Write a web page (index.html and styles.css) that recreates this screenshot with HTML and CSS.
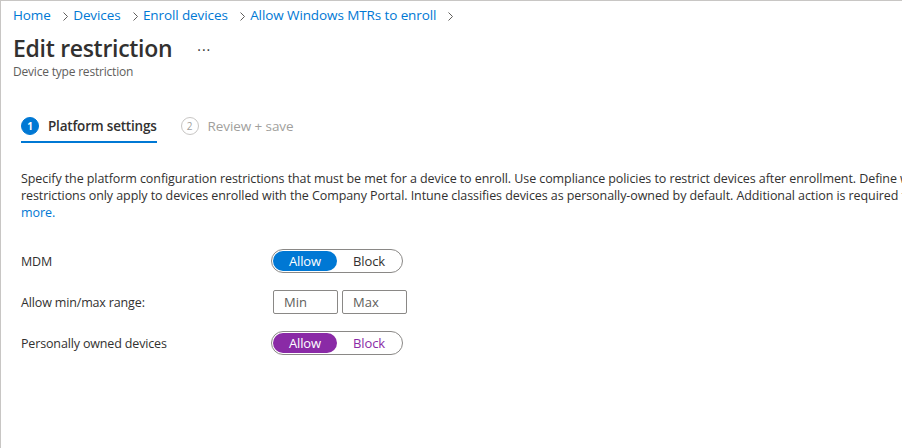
FILE: index.html
```html
<!DOCTYPE html>
<html lang="en">
<head>
  <meta charset="UTF-8">
  <title>Edit restriction</title>
  <meta name="viewport" content="width=device-width, initial-scale=1.0">
  <link rel="stylesheet" href="styles.css">
</head>
<body>
  <div class="blade">
    <!-- Хлебные крошки -->
    <nav class="crumbs">
      <a href="#">Home</a><svg class="sep" width="5" height="9" viewBox="0 0 5 9"><path d="M0.5 0.5 L4.5 4.5 L0.5 8.5" fill="none" stroke="#605e5c" stroke-width="1"/></svg>
      <a href="#">Devices</a><svg class="sep" width="5" height="9" viewBox="0 0 5 9"><path d="M0.5 0.5 L4.5 4.5 L0.5 8.5" fill="none" stroke="#605e5c" stroke-width="1"/></svg>
      <a href="#">Enroll devices</a><svg class="sep" width="5" height="9" viewBox="0 0 5 9"><path d="M0.5 0.5 L4.5 4.5 L0.5 8.5" fill="none" stroke="#605e5c" stroke-width="1"/></svg>
      <a href="#">Allow Windows MTRs to enroll</a><svg class="sep" width="5" height="9" viewBox="0 0 5 9"><path d="M0.5 0.5 L4.5 4.5 L0.5 8.5" fill="none" stroke="#605e5c" stroke-width="1"/></svg>
    </nav>

    <header class="blade-head">
      <div class="title-row">
        <h1>Edit restriction</h1>
        <span class="more-dots">&middot;&middot;&middot;</span>
      </div>
      <div class="subtitle">Device type restriction</div>
    </header>

    <!-- Шаги мастера -->
    <div class="steps">
      <div class="step active">
        <span class="step-num">1</span>
        <span class="step-label">Platform settings</span>
      </div>
      <div class="step">
        <span class="step-num">2</span>
        <span class="step-label">Review + save</span>
      </div>
    </div>

    <p class="intro">
      Specify the platform configuration restrictions that must be met for a device to enroll. Use compliance policies to restrict devices after enrollment. Define which platforms, versions, and management types can enroll. These<br>
      restrictions only apply to devices enrolled with the Company Portal. Intune classifies devices as personally-owned by default. Additional action is required to classify devices as corporate-owned. Learn<br>
      <a href="#">more.</a>
    </p>

    <div class="settings">
      <div class="row">
        <span class="row-label">MDM</span>
        <div class="toggle">
          <span class="opt on">Allow</span>
          <span class="opt">Block</span>
        </div>
      </div>
      <div class="row">
        <span class="row-label">Allow min/max range:</span>
        <div class="range">
          <input type="text" placeholder="Min">
          <input type="text" placeholder="Max">
        </div>
      </div>
      <div class="row">
        <span class="row-label">Personally owned devices</span>
        <div class="toggle changed">
          <span class="opt on">Allow</span>
          <span class="opt">Block</span>
        </div>
      </div>
    </div>
  </div>
</body>
</html>
```

FILE: styles.css
```css
html, body {
  margin: 0;
  padding: 0;
  height: 100%;
  overflow: hidden;
}
body {
  background: #fff;
  font-family: "Open Sans", "Noto Sans", sans-serif;
  color: #323130;
}
.blade {
  height: 100vh;
  box-sizing: border-box;
  border-top: 1px solid #c8c6c4;
  border-left: 1px solid #c8c6c4;
  overflow: hidden;
}
/* Крошки */
.crumbs {
  padding: 4px 0 0 12px;
  height: 20px;
  font-size: 13.5px;
  letter-spacing: -0.1px;
  line-height: 20px;
  white-space: nowrap;
}
.crumbs a {
  color: #0078d4;
  text-decoration: none;
}
.crumbs .sep {
  margin: 0 2px 0 12px;
  vertical-align: -0.5px;
}
/* Заголовок */
.blade-head {
  padding: 7px 0 0 12px;
}
.title-row {
  display: flex;
  align-items: center;
  height: 32px;
}
.title-row h1 {
  margin: 0;
  font-size: 23px;
  letter-spacing: -0.3px;
  font-weight: 600;
  line-height: 32px;
}
.more-dots {
  margin-left: 25px;
  font-size: 14px;
  color: #323130;
  letter-spacing: 1px;
  padding-top: 2px;
}
.subtitle {
  font-size: 12px;
  letter-spacing: -0.2px;
  line-height: 16px;
  color: #605e5c;
}
/* Шаги */
.steps {
  display: flex;
  gap: 24px;
  padding: 33px 0 0 20px;
}
.step {
  display: flex;
  align-items: center;
  gap: 9px;
  height: 30px;
  font-size: 13.5px;
  letter-spacing: -0.1px;
  color: #a19f9d;
  box-sizing: border-box;
  border-bottom: 2px solid transparent;
  padding-bottom: 2px;
}
.step.active {
  color: #323130;
  font-weight: 600;
  letter-spacing: -0.2px;
  border-bottom-color: #0078d4;
}
.step-num {
  width: 16px;
  height: 16px;
  border-radius: 50%;
  border: 1px solid #c8c6c4;
  font-size: 10px;
  font-weight: 400;
  letter-spacing: 0;
  line-height: 16px;
  text-align: center;
  color: #a19f9d;
}
.step.active .step-num {
  background: #0078d4;
  border-color: #0078d4;
  color: #fff;
  font-weight: 700;
}
/* Описание */
.intro {
  margin: 27px 0 0 20px;
  font-size: 12.5px;
  letter-spacing: -0.08px;
  line-height: 17px;
  white-space: nowrap;
  color: #323130;
}
.intro a {
  color: #0078d4;
  text-decoration: none;
}
/* Настройки */
.settings {
  padding: 28px 0 0 20px;
  display: flex;
  flex-direction: column;
  gap: 17px;
}
.row {
  display: flex;
  align-items: center;
  height: 24px;
  font-size: 12.5px;
  letter-spacing: -0.15px;
}
.row-label {
  width: 250px;
}
.toggle {
  display: flex;
  align-items: center;
  width: 132px;
  height: 24px;
  box-sizing: border-box;
  border: 1px solid #8a8886;
  border-radius: 12px;
  padding: 0 1px;
}
.toggle .opt {
  flex: 1;
  height: 20px;
  line-height: 20px;
  text-align: center;
  border-radius: 10px;
  font-size: 13px;
  color: #323130;
}
.toggle .opt.on {
  background: #0078d4;
  color: #fff;
}
.toggle.changed .opt {
  color: #8a2aa6;
}
.toggle.changed .opt.on {
  background: #8a2aa6;
  color: #fff;
}
.range {
  display: flex;
  gap: 4px;
  padding-left: 2px;
}
.range input {
  width: 65px;
  height: 24px;
  box-sizing: border-box;
  border: 1px solid #8a8886;
  border-radius: 2px;
  padding: 0 10px;
  font-family: inherit;
  font-size: 13px;
  color: #323130;
}
.range input::placeholder {
  color: #605e5c;
}
```
